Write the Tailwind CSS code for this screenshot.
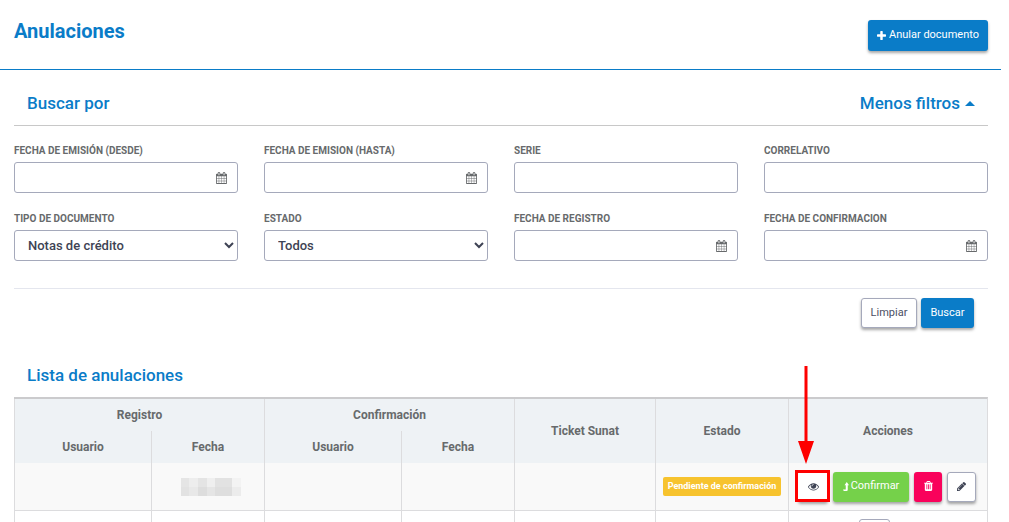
<!DOCTYPE html>
<html lang="es">
<head>
<meta charset="utf-8">
<meta name="viewport" content="width=device-width, initial-scale=1">
<title>Anulaciones</title>
<script src="https://cdn.jsdelivr.net/npm/@tailwindcss/browser@4"></script>
</head>
<body class="h-screen overflow-hidden bg-white pr-2 font-[Roboto,'Liberation_Sans',sans-serif] text-[#676a6c]">
<svg class="hidden" aria-hidden="true">
  <symbol id="plus" viewBox="192 128 1408 1408"><path d="M1600 736v192q0 40-28 68t-68 28h-416v416q0 40-28 68t-68 28h-192q-40 0-68-28t-28-68v-416h-416q-40 0-68-28t-28-68v-192q0-40 28-68t68-28h416v-416q0-40 28-68t68-28h192q40 0 68 28t28 68v416h416q40 0 68 28t28 68z"/></symbol>
  <symbol id="calendar" viewBox="64 0 1664 1792"><path d="M192 1664h288v-288h-288v288zm352 0h320v-288h-320v288zm-352-352h288v-320h-288v320zm352 0h320v-320h-320v320zm-352-384h288v-288h-288v288zm736 736h320v-288h-320v288zm-384-736h320v-288h-320v288zm768 736h288v-288h-288v288zm-384-352h320v-320h-320v320zm-352-864v-288q0-13-9.5-22.5t-22.5-9.5h-64q-13 0-22.5 9.5t-9.5 22.5v288q0 13 9.5 22.5t22.5 9.5h64q13 0 22.5-9.5t9.5-22.5zm736 864h288v-320h-288v320zm-384-384h320v-288h-320v288zm384 0h288v-288h-288v288zm32-480v-288q0-13-9.5-22.5t-22.5-9.5h-64q-13 0-22.5 9.5t-9.5 22.5v288q0 13 9.5 22.5t22.5 9.5h64q13 0 22.5-9.5t9.5-22.5zm384-64v1280q0 52-38 90t-90 38h-1408q-52 0-90-38t-38-90v-1280q0-52 38-90t90-38h128v-96q0-66 47-113t113-47h64q66 0 113 47t47 113v96h384v-96q0-66 47-113t113-47h64q66 0 113 47t47 113v96h128q52 0 90 38t38 90z"/></symbol>
  <symbol id="eye" viewBox="0 0 1792 1792"><path d="M1664 960q-152-236-381-353 61 104 61 225 0 185-131.5 316.5t-316.5 131.5-316.5-131.5-131.5-316.5q0-121 61-225-229 117-381 353 133 205 333.5 326.5t434.5 121.5 434.5-121.5 333.5-326.5zm-720-384q0-20-14-34t-34-14q-125 0-214.5 89.5t-89.5 214.5q0 20 14 34t34 14 34-14 14-34q0-86 61-147t147-61q20 0 34-14t14-34zm848 384q0 34-20 69-140 230-376.5 368.5t-499.5 138.5-499.5-139-376.5-368q-20-35-20-69t20-69q140-229 376.5-368t499.5-139 499.5 139 376.5 368q20 35 20 69z"/></symbol>
  <symbol id="trash" viewBox="192 128 1408 1536"><path d="M704 1376v-704q0-14-9-23t-23-9h-64q-14 0-23 9t-9 23v704q0 14 9 23t23 9h64q14 0 23-9t9-23zm256 0v-704q0-14-9-23t-23-9h-64q-14 0-23 9t-9 23v704q0 14 9 23t23 9h64q14 0 23-9t9-23zm256 0v-704q0-14-9-23t-23-9h-64q-14 0-23 9t-9 23v704q0 14 9 23t23 9h64q14 0 23-9t9-23zm-544-992h448l-48-117q-7-9-17-11h-317q-10 2-17 11zm928 32v64q0 14-9 23t-23 9h-96v948q0 83-47 143.5t-113 60.5h-832q-66 0-113-58.5t-47-141.5v-952h-96q-14 0-23-9t-9-23v-64q0-14 9-23t23-9h309l70-167q15-37 54-63t79-26h320q40 0 79 26t54 63l70 167h309q14 0 23 9t9 23z"/></symbol>
  <symbol id="pencil" viewBox="128 148 1516 1516"><path d="M491 1536l91-91-235-235-91 91v107h128v128h107zm523-928q0-22-22-22-10 0-17 7l-542 542q-7 7-7 17 0 22 22 22 10 0 17-7l542-542q7-7 7-17zm-54-192l416 416-832 832h-416v-416zm683 96q0 53-37 90l-166 166-416-416 166-165q36-38 90-38 53 0 91 38l235 234q37 39 37 91z"/></symbol>
  <symbol id="level-up" viewBox="0 0 12 18"><path d="M7.500 0 12 6.500H9.500V15.500Q9.500 18 7 18H1.500L0 15H5.500V6.500H3Z"/></symbol>
</svg>

<header class="flex items-start justify-between border-b border-[#0a7cc8] pt-5 pr-[13px] pb-[18px] pl-[14px]">
  <h1 class="text-[20px] leading-[22px] font-bold text-[#0a7cc8]">Anulaciones</h1>
  <button type="button" class="flex h-[31px] items-center gap-[3px] rounded-[3px] bg-[#0a7cc8] px-[9px] pb-px text-[11px] text-white shadow-[0_2px_3px_rgba(0,0,0,0.35)]"><svg class="size-[9px] fill-current"><use href="#plus"/></svg>Anular documento</button>
</header>

<main class="pr-[13px] pl-[14px]">
  <section>
    <div class="flex h-14 items-center justify-between border-b border-[#c8c8c8] px-[13px] pt-3 text-[17px] font-medium text-[#0a7cc8]">
      <h2>Buscar por</h2>
      <button type="button" class="flex items-center gap-[5px]">Menos filtros<svg class="h-[5px] w-[10px] fill-current" viewBox="0 0 10 5"><path d="M5 0 10 5H0Z"/></svg></button>
    </div>
    <form>
      <div class="grid grid-cols-4 gap-x-[26px] gap-y-[19px] border-b border-[#e4e6ee] pt-[18px] pb-[27px] text-[10px] font-bold">
        <div>
          <label for="desde" class="block h-[18px] leading-[14px]">FECHA DE EMISIÓN (DESDE)</label>
          <div class="flex h-[31px] items-center rounded-[3px] border border-[#a5a9bb] pr-[10px]">
            <input id="desde" type="text" class="h-full min-w-0 flex-1 px-3 text-[13px] font-medium outline-none"><svg class="h-3 w-[11px] fill-current"><use href="#calendar"/></svg>
          </div>
        </div>
        <div>
          <label for="hasta" class="block h-[18px] leading-[14px]">FECHA DE EMISION (HASTA)</label>
          <div class="flex h-[31px] items-center rounded-[3px] border border-[#a5a9bb] pr-[10px]">
            <input id="hasta" type="text" class="h-full min-w-0 flex-1 px-3 text-[13px] font-medium outline-none"><svg class="h-3 w-[11px] fill-current"><use href="#calendar"/></svg>
          </div>
        </div>
        <div>
          <label for="serie" class="block h-[18px] leading-[14px]">SERIE</label>
          <input id="serie" type="text" class="block h-[31px] w-full rounded-[3px] border border-[#a5a9bb] px-3 text-[13px] font-medium">
        </div>
        <div>
          <label for="correlativo" class="block h-[18px] leading-[14px]">CORRELATIVO</label>
          <input id="correlativo" type="text" class="block h-[31px] w-full rounded-[3px] border border-[#a5a9bb] px-3 text-[13px] font-medium">
        </div>
        <div>
          <label for="tipo" class="block h-[18px] leading-[14px]">TIPO DE DOCUMENTO</label>
          <select id="tipo" class="block h-[31px] w-full rounded-[3px] border border-[#a5a9bb] bg-white pl-[9px] text-[13px] font-medium text-[#3e4354]"><option>Notas de crédito</option></select>
        </div>
        <div>
          <label for="estado" class="block h-[18px] leading-[14px]">ESTADO</label>
          <select id="estado" class="block h-[31px] w-full rounded-[3px] border border-[#a5a9bb] bg-white pl-[9px] text-[13px] font-medium text-[#3e4354]"><option>Todos</option></select>
        </div>
        <div>
          <label for="registro" class="block h-[18px] leading-[14px]">FECHA DE REGISTRO</label>
          <div class="flex h-[31px] items-center rounded-[3px] border border-[#a5a9bb] pr-[10px]">
            <input id="registro" type="text" class="h-full min-w-0 flex-1 px-3 text-[13px] font-medium outline-none"><svg class="h-3 w-[11px] fill-current"><use href="#calendar"/></svg>
          </div>
        </div>
        <div>
          <label for="confirmacion" class="block h-[18px] leading-[14px]">FECHA DE CONFIRMACION</label>
          <div class="flex h-[31px] items-center rounded-[3px] border border-[#a5a9bb] pr-[10px]">
            <input id="confirmacion" type="text" class="h-full min-w-0 flex-1 px-3 text-[13px] font-medium outline-none"><svg class="h-3 w-[11px] fill-current"><use href="#calendar"/></svg>
          </div>
        </div>
      </div>
      <div class="flex justify-end gap-1 pt-[9px] pr-[14px] text-[11px]">
        <button type="reset" class="h-[30px] w-14 rounded-[3px] border border-[#a5a9bb] bg-white text-[#4b5064] shadow-[0_2px_3px_rgba(0,0,0,0.35)]">Limpiar</button>
        <button type="button" class="h-[30px] w-[53px] rounded-[3px] bg-[#0a7cc8] text-white shadow-[0_2px_3px_rgba(0,0,0,0.35)]">Buscar</button>
      </div>
    </form>
  </section>

  <section class="pt-[35px]">
    <h2 class="pb-[10px] pl-[13px] text-[17px] leading-6 font-medium text-[#0a7cc8]">Lista de anulaciones</h2>
    <table class="w-full table-fixed border-separate border-spacing-0 border-t-2 border-r border-t-[#cbcbcd] border-r-[#dcdcde] text-[12px]">
      <colgroup>
        <col class="w-[137px]"><col class="w-[113px]"><col class="w-[137px]"><col class="w-[113px]"><col class="w-[141px]"><col class="w-[133px]"><col class="w-[199px]">
      </colgroup>
      <thead class="bg-[#eef2f5] font-bold">
        <tr class="h-8">
          <th colspan="2" class="border-l border-[#dcdcde]">Registro</th>
          <th colspan="2" class="border-l border-[#dcdcde]">Confirmación</th>
          <th rowspan="2" class="border-l border-[#dcdcde]">Ticket Sunat</th>
          <th rowspan="2" class="border-l border-[#dcdcde]">Estado</th>
          <th rowspan="2" class="border-l border-[#dcdcde]">Acciones</th>
        </tr>
        <tr class="h-8">
          <th class="border-l border-[#dcdcde]">Usuario</th>
          <th class="border-l border-[#dcdcde]">Fecha</th>
          <th class="border-l border-[#dcdcde]">Usuario</th>
          <th class="border-l border-[#dcdcde]">Fecha</th>
        </tr>
      </thead>
      <tbody>
        <tr class="h-12 bg-[#f9f9f9]">
          <td class="border-b border-l border-[#dcdcde]"></td>
          <td class="border-b border-l border-[#dcdcde] px-0 pl-[6px]">
            <div class="mx-auto grid h-[18px] w-[60px] grid-cols-[8fr_9fr_9fr_8fr_17fr_9fr]" aria-hidden="true">
              <i class="bg-[#e5e5e5]"></i><i class="bg-[#ededed]"></i><i class="bg-[#e4e4e4]"></i><i class="bg-[#efefef]"></i><i class="bg-[#e2e2e2]"></i><i class="bg-[#f3f3f3]"></i>
              <i class="bg-[#e2e2e2]"></i><i class="bg-[#e8e8e8]"></i><i class="bg-[#dddddd]"></i><i class="bg-[#e5e5e5]"></i><i class="bg-[#dedede]"></i><i class="bg-[#ececec]"></i>
            </div>
          </td>
          <td class="border-b border-l border-[#dcdcde]"></td>
          <td class="border-b border-l border-[#dcdcde]"></td>
          <td class="border-b border-l border-[#dcdcde]"></td>
          <td class="border-b border-l border-[#dcdcde] px-[7px] text-center"><span class="flex h-[19px] items-center justify-center rounded-[2px] bg-[#f7c32e] pt-px text-[9px] font-bold whitespace-nowrap text-white">Pendiente de confirmación</span></td>
          <td class="border-b border-l border-[#dcdcde]">
            <div class="flex items-center justify-center gap-[5px] pr-[2px] text-[11px] text-white">
              <div class="relative">
                <button type="button" aria-label="Ver" class="flex h-[30px] w-[30px] items-center justify-center rounded-[3px] bg-white pb-px text-[#3e4354] shadow-[0_2px_3px_rgba(0,0,0,0.35)]"><svg class="size-[11px] fill-current"><use href="#eye"/></svg></button>
                <!-- Marca roja y flecha que señalan el botón Ver -->
                <div class="pointer-events-none absolute -top-[2px] -left-[3px] h-8 w-[35px] border-[3px] border-[#fe0000]"></div>
                <svg class="pointer-events-none absolute bottom-[38px] left-0 h-[98px] w-4 fill-[#fe0000]" viewBox="0 0 16 98"><path d="M6.500 0h3v75H16L8 98 0 75h6.500z"/></svg>
              </div>
              <button type="button" class="flex h-[30px] w-[76px] items-center justify-center gap-[2px] rounded-[3px] bg-[#75d14a] pb-px shadow-[0_2px_3px_rgba(0,0,0,0.35)]"><svg class="h-[9px] w-[6px] fill-current"><use href="#level-up"/></svg>Confirmar</button>
              <button type="button" aria-label="Eliminar" class="flex h-[30px] w-7 items-center justify-center rounded-[3px] bg-[#f9025b] pb-px shadow-[0_2px_3px_rgba(0,0,0,0.35)]"><svg class="h-[10px] w-[9px] fill-current"><use href="#trash"/></svg></button>
              <button type="button" aria-label="Editar" class="flex h-[30px] w-[29px] items-center justify-center rounded-[3px] border border-[#a5a9bb] bg-white pb-px text-[#3e4354] shadow-[0_2px_3px_rgba(0,0,0,0.35)]"><svg class="size-[9px] fill-current"><use href="#pencil"/></svg></button>
            </div>
          </td>
        </tr>
        <tr class="h-12">
          <td class="border-b border-l border-[#dcdcde]"></td>
          <td class="border-b border-l border-[#dcdcde]"></td>
          <td class="border-b border-l border-[#dcdcde]"></td>
          <td class="border-b border-l border-[#dcdcde]"></td>
          <td class="border-b border-l border-[#dcdcde]"></td>
          <td class="border-b border-l border-[#dcdcde]"></td>
          <td class="border-b border-l border-[#dcdcde] pt-2 pr-7 align-top">
            <button type="button" aria-label="Ver" class="mx-auto flex h-[30px] w-[31px] items-center justify-center rounded-[3px] border border-[#a5a9bb] bg-white text-[#3e4354]"><svg class="size-[11px] fill-current"><use href="#eye"/></svg></button>
          </td>
        </tr>
      </tbody>
    </table>
  </section>
</main>
</body>
</html>
